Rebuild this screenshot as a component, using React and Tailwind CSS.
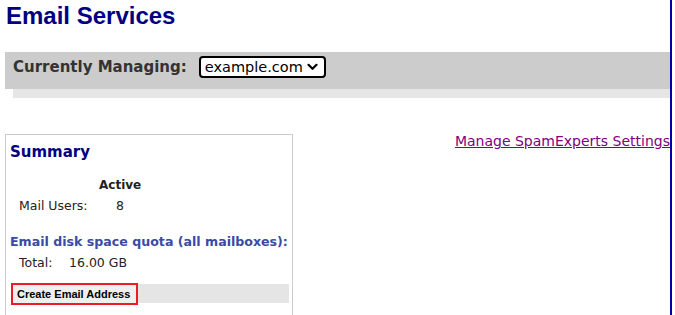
const verdana = "font-['DejaVu_Sans',Verdana,sans-serif]";
const arial = "font-['Liberation_Sans',Arial,sans-serif]";

function Chevron() {
  return (
    <svg width="11" height="8" viewBox="0 0 11 8" fill="none" stroke="#000" strokeWidth="2.2" strokeLinecap="round" strokeLinejoin="round">
      <path d="M1.5 1.8l4 4 4-4" />
    </svg>
  );
}

function DomainBar() {
  return (
    <>
      <div className="mt-[22px] h-[37px] bg-[#cccccc] flex items-start pt-[4px] pl-[8px]">
        <div className="flex items-center h-[22px] gap-[12px]">
          <span className={`${verdana} text-[15px] leading-[22px] font-bold text-[#333333]`}>Currently Managing:</span>
          <div className={`${verdana} w-[127px] h-[22px] border-2 border-black rounded-[4px] bg-white flex items-center justify-between pl-[4px] pr-[6px] text-[14.5px] leading-[18px] text-black`}>
            <span>example.com</span>
            <Chevron />
          </div>
        </div>
      </div>
      <div className="ml-[8px] h-[9px] bg-[#e6e6e6]" />
    </>
  );
}

function Summary() {
  return (
    <div className={`${verdana} w-[288px] h-[200px] shrink-0 border border-[#cccccc] text-[#222222]`}>
      <div className="pt-[8px] pl-[4px] text-[15px] leading-[18px] font-bold text-[#000080]">Summary</div>

      <div className="mt-[16px] ml-[13px] flex">
        <div className="w-[80px]" />
        <div className="w-[42px] text-center text-[12px] leading-[16px] font-bold">Active</div>
      </div>
      <div className="mt-[5px] ml-[13px] flex text-[12.5px] leading-[16px]">
        <div className="w-[80px]">Mail Users:</div>
        <div className="w-[42px] text-center">8</div>
      </div>

      <div className="mt-[20px] pl-[4px] text-[12.6px] leading-[16px] font-bold text-[#3b4aa3] whitespace-nowrap">
        Email disk space quota (all mailboxes):
      </div>
      <div className="mt-[5px] ml-[13px] flex text-[12.5px] leading-[16px]">
        <div className="w-[50px]">Total:</div>
        <div>16.00 GB</div>
      </div>

      <div className="mt-[13px] ml-[5px] mr-[3px] h-[19px] bg-[#e5e5e5] flex items-center">
        <button className={`${arial} w-[127px] h-[22px] border-2 border-[#ec1c24] bg-[#efefef] text-left pl-[4px] text-[11px] leading-[18px] font-bold text-black`}>
          Create Email Address
        </button>
      </div>
    </div>
  );
}

export default function App() {
  return (
    <div className="w-[672px] h-[315px] border-r-2 border-[#0000a8] pl-[5px] bg-white overflow-hidden">
      <h1 className={`${arial} pt-[2px] pl-[1px] text-[24px] leading-[28px] font-bold text-[#000080]`}>Email Services</h1>
      <DomainBar />
      <div className="mt-[36px] flex justify-between items-start">
        <Summary />
        <a href="#" className={`${verdana} text-[14px] leading-[14px] text-[#800080] underline whitespace-nowrap`}>
          Manage SpamExperts Settings
        </a>
      </div>
    </div>
  );
}
